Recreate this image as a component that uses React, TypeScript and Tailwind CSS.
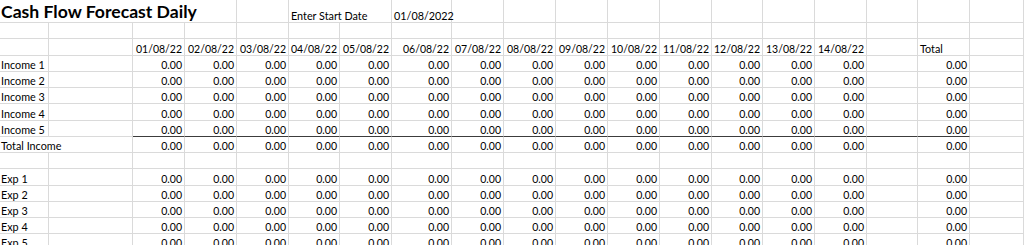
import React from "react";

type Cell = {
  text?: string;
  span?: number;
  right?: boolean;
  title?: boolean;
  dark?: boolean;
};

const GRID =
  "grid grid-cols-[49px_84px_52px_52px_52px_51px_52px_60px_52px_52px_52px_52px_52px_51px_52px_52px_51px_52px_54px]";

const dates = [
  "01/08/22",
  "02/08/22",
  "03/08/22",
  "04/08/22",
  "05/08/22",
  "06/08/22",
  "07/08/22",
  "08/08/22",
  "09/08/22",
  "10/08/22",
  "11/08/22",
  "12/08/22",
  "13/08/22",
  "14/08/22",
];

const blankRow = (): Cell[] => Array.from({ length: 19 }, () => ({}));

const dataRow = (label: string, spanLabel = false, dark = false): Cell[] => {
  const cells: Cell[] = [];
  if (spanLabel) {
    cells.push({ text: label, span: 2 });
  } else {
    cells.push({ text: label }, {});
  }
  dates.forEach(() => cells.push({ text: "0.00", right: true, dark }));
  cells.push({ dark }, { text: "0.00", right: true, dark }, {});
  return cells;
};

const rows: { h: string; cells: Cell[] }[] = [
  {
    h: "h-[23px]",
    cells: [
      { text: "Cash Flow Forecast Daily", span: 4, title: true },
      {},
      { text: "Enter Start Date", span: 2 },
      { text: "01/08/2022" },
      ...Array.from({ length: 11 }, () => ({})),
    ],
  },
  { h: "h-[16px]", cells: blankRow() },
  {
    h: "h-[17px]",
    cells: [
      {},
      {},
      ...dates.map((d) => ({ text: d, right: true })),
      {},
      { text: "Total" },
      {},
    ],
  },
  { h: "h-[16px]", cells: dataRow("Income 1") },
  { h: "h-[16px]", cells: dataRow("Income 2") },
  { h: "h-[16px]", cells: dataRow("Income 3") },
  { h: "h-[17px]", cells: dataRow("Income 4") },
  { h: "h-[16px]", cells: dataRow("Income 5", false, true) },
  { h: "h-[16px]", cells: dataRow("Total Income", true) },
  { h: "h-[16px]", cells: blankRow() },
  { h: "h-[17px]", cells: dataRow("Exp 1") },
  { h: "h-[16px]", cells: dataRow("Exp 2") },
  { h: "h-[16px]", cells: dataRow("Exp 3") },
  { h: "h-[16px]", cells: dataRow("Exp 4") },
  { h: "h-[16px]", cells: dataRow("Exp 5") },
];

function SheetCell({ cell, first }: { cell: Cell; first: boolean }) {
  const span =
    cell.span === 4 ? "col-span-4" : cell.span === 2 ? "col-span-2" : "";
  return (
    <div
      className={[
        "flex items-end overflow-visible whitespace-nowrap border-r border-b border-r-[#dadada]",
        cell.dark ? "border-b-[#3c3c3c]" : "border-b-[#dadada]",
        cell.right ? "justify-end pr-[2px]" : first ? "pl-[1px]" : "pl-[2px]",
        span,
      ].join(" ")}
    >
      {cell.text &&
        (cell.title ? (
          <span className="text-[17.6px] leading-[20px] font-bold text-black">
            {cell.text}
          </span>
        ) : cell.right ? (
          <span className="text-[10.5px] leading-[12px] text-black">
            {cell.text}
          </span>
        ) : (
          <span className="text-[10.8px] leading-[12px] text-black">
            {cell.text}
          </span>
        ))}
    </div>
  );
}

export default function App() {
  return (
    <div
      className="w-[1024px] h-[245px] overflow-hidden bg-white"
      style={{ fontFamily: "Lato, 'Liberation Sans', sans-serif" }}
    >
      {rows.map((row, i) => (
        <div key={i} className={`${GRID} ${row.h}`}>
          {row.cells.map((c, j) => (
            <SheetCell key={j} cell={c} first={j === 0} />
          ))}
        </div>
      ))}
    </div>
  );
}
